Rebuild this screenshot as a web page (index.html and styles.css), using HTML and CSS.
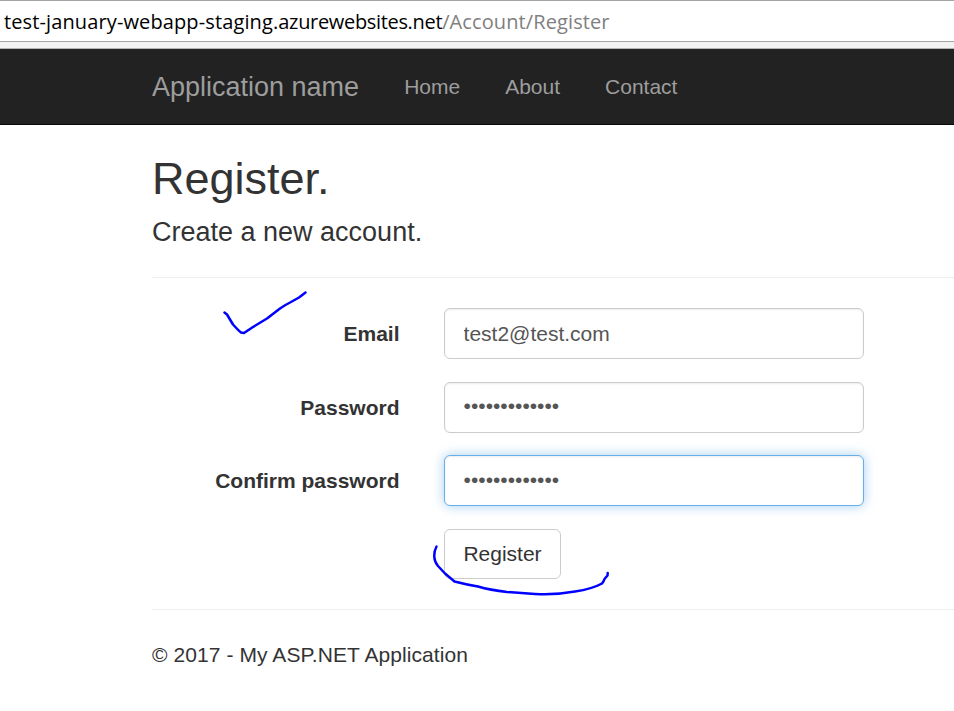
FILE: index.html
```html
<!DOCTYPE html>
<html lang="en">
<head>
<meta charset="utf-8">
<title>Register - My ASP.NET Application</title>
<link rel="stylesheet" href="styles.css">
</head>
<body>
<div class="address"><span class="subdomain">test-january-webapp-staging.</span><span class="domain">azurewebsites.net</span><span class="path">/Account/Register</span></div>
<div class="toolbar-edge"></div>
<nav class="navbar">
  <a class="brand">Application name</a>
  <a class="link">Home</a>
  <a class="link">About</a>
  <a class="link">Contact</a>
</nav>
<main class="content">
  <h2>Register.</h2>
  <h4>Create a new account.</h4>
  <hr>
  <form class="form">
    <label for="email">Email</label>
    <input id="email" class="control" type="text" value="test2@test.com">
    <label class="password-label" for="password">Password</label>
    <input id="password" class="control secret" type="password" value="January-2017!">
    <label for="confirm">Confirm password</label>
    <input id="confirm" class="control secret focused" type="password" value="January-2017!">
    <button class="submit" type="button">Register</button>
  </form>
  <hr>
  <footer>© 2017 - My ASP.NET Application</footer>
</main>
<svg class="ink" width="954" height="711" viewBox="0 0 954 711" aria-hidden="true">
  <path d="M224.500 312.500 L227 314.500 L233 324.500 Q238 330 241 332.500 L244 333 L253 327 L267 318.500 L280 308.500 Q285 305 291 302 L299 297.500 L305.500 292.500"/>
  <path d="M436.500 546.500 Q434 551 434.300 557 Q434.600 562 438 566 L445 573.500 L454.500 581.500 Q466 584.500 478 586.500 Q490 590 507 592 L535 593.900 Q556 595 575 591.500 Q592 589 602 583.500 Q604 581 604.500 579 L607.500 575.500 L607.700 573"/>
</svg>
</body>
</html>
```
FILE: styles.css
```css
* { box-sizing: border-box; }

body {
  margin: 0;
  height: 711px;
  overflow: hidden;
  background: #fff;
  color: #333;
  font: 21px/30px "Liberation Sans", Arial, sans-serif;
}

.address {
  height: 42px;
  padding-left: 4px;
  border-top: 1px solid #a5a5a5;
  border-bottom: 1px solid #a5a5a5;
  color: #000;
  font: 20px/42px "Open Sans", "Noto Sans", sans-serif;
  white-space: nowrap;
}
.subdomain { letter-spacing: 0.12px; }
.domain { letter-spacing: -0.33px; }
.path { color: #808080; letter-spacing: 0.1px; }

.toolbar-edge {
  height: 7px;
  background: #f2f2f2;
  border-bottom: 1px solid #b0b4b5;
}

.navbar {
  display: flex;
  align-items: center;
  height: 76px;
  padding-left: 152px;
  background: #222;
  border-bottom: 1px solid #080808;
  color: #9d9d9d;
}
.brand { margin-right: 45px; font-size: 27px; }
.link { margin-right: 45px; }

.content { padding-left: 152px; }

h2, h4 { margin: 0; font-weight: 400; }
h2 { padding-top: 29px; font-size: 45px; line-height: 50px; }
h4 { margin-top: 13px; font-size: 27px; line-height: 30px; }
hr { margin: 30px 0; border: 0; border-top: 1px solid #eee; }

.form {
  display: grid;
  grid-template-columns: 247.5px 420px;
  grid-template-rows: 51px 51px 51px 50px;
  column-gap: 44.5px;
  row-gap: 22.67px;
  align-items: center;
}
label { text-align: right; font-weight: 700; }
.password-label { padding-top: 2px; }

.control {
  width: 420px;
  height: 51px;
  padding: 9px 18px 9px 18.6px;
  border: 1px solid #ccc;
  border-radius: 6px;
  outline: 0;
  background: #fff;
  box-shadow: inset 0 1px 2px rgba(0, 0, 0, .075);
  color: #555;
  font: inherit;
}
.control.secret { padding-top: 8px; padding-bottom: 10px; }
.control.focused {
  border-color: #66afe9;
  box-shadow: inset 0 1px 2px rgba(0, 0, 0, .075), 0 0 12px rgba(102, 175, 233, .6);
}

.submit {
  grid-column: 2;
  justify-self: start;
  width: 117px;
  height: 50px;
  padding: 0;
  border: 1px solid #ccc;
  border-radius: 6px;
  background: #fff;
  color: #333;
  font: inherit;
}

footer { letter-spacing: 0.08px; }

/* Pen strokes drawn over the page */
.ink {
  position: absolute;
  top: 0;
  left: 0;
  fill: none;
  stroke: #00f;
  stroke-width: 2.5;
  stroke-linecap: round;
  stroke-linejoin: round;
  pointer-events: none;
}
```
